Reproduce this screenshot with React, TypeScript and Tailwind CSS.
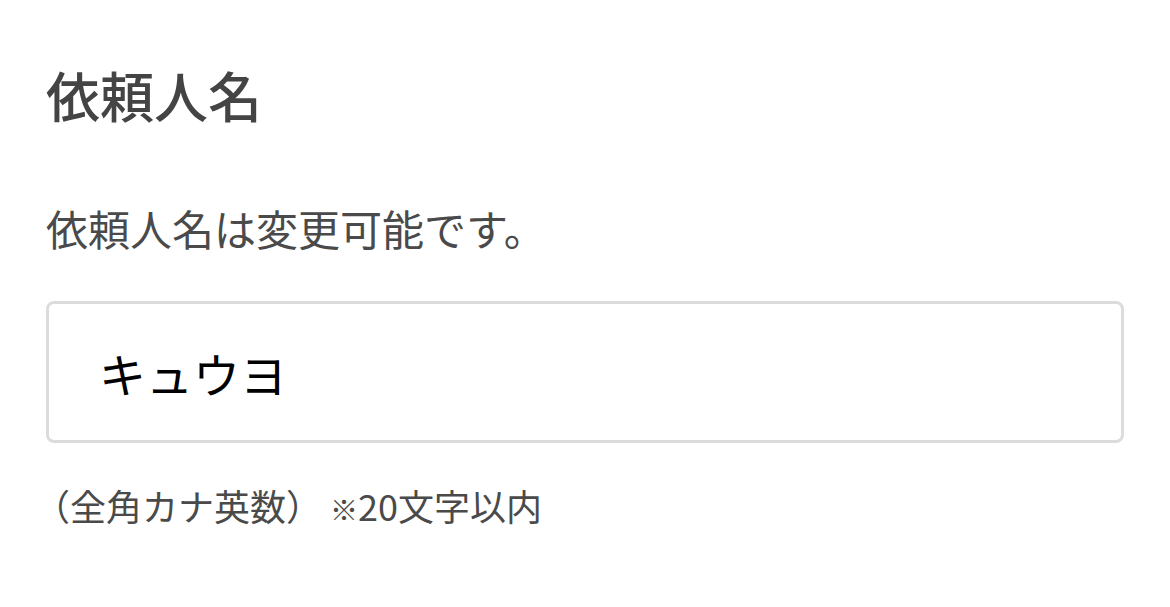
const jp = { fontFamily: '"Noto Sans CJK JP", "Noto Sans", sans-serif' }

export default function App() {
  return (
    <div className="min-h-[607px] w-[1170px] bg-white text-[#444]" style={jp}>
      <div className="px-[46px] pt-[68px]">
        <h1 className="text-[54px] font-medium leading-none">依頼人名</h1>
        <p className="mt-[85px] text-[42px] leading-none text-[#4a4a4a]">依頼人名は変更可能です。</p>
        <div className="mt-[52px] flex h-[142px] w-[1078px] items-center rounded-[8px] border-[3px] border-[#dcdcdc] pl-[50px]">
          <span className="text-[47px] leading-none text-black">キュウヨ</span>
        </div>
        <p className="mt-[44px] -ml-[12px] text-[36px] leading-none text-[#4a4a4a]">
          （全角カナ英数） <span className="text-[28px]">※</span>20文字以内
        </p>
      </div>
    </div>
  )
}
